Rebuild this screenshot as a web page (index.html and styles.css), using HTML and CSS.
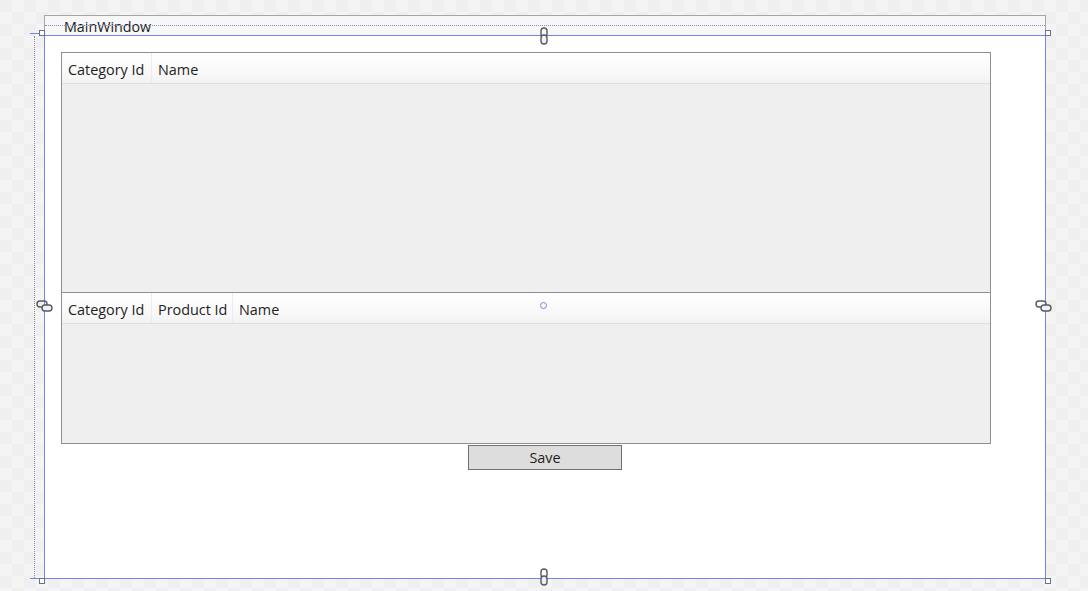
FILE: index.html
```html
<!DOCTYPE html>
<html lang="en">
<head>
  <meta charset="UTF-8">
  <title>MainWindow - Designer</title>
  <link rel="stylesheet" href="styles.css">
</head>
<body>
  <div class="canvas">
    <div class="window">
      <div class="title-bar">MainWindow</div>
      <div class="client">
        <div class="grids">
          <div class="grid grid-top">
            <div class="grid-header">
              <div class="col col-cat">Category Id</div>
              <div class="col col-fill">Name</div>
            </div>
          </div>
          <div class="grid grid-bottom">
            <div class="grid-header">
              <div class="col col-cat">Category Id</div>
              <div class="col col-prod">Product Id</div>
              <div class="col col-fill">Name</div>
            </div>
          </div>
        </div>
        <div class="actions">
          <button class="save-btn">Save</button>
        </div>
      </div>
    </div>

    <!-- designer adorners -->
    <div class="guide guide-v"></div>
    <div class="guide guide-h"></div>
    <div class="tick tick-tl"></div>
    <div class="tick tick-bl"></div>
    <div class="handle handle-tl"></div>
    <div class="handle handle-tr"></div>
    <div class="handle handle-bl"></div>
    <div class="handle handle-br"></div>
    <div class="splitter-dot"></div>

    <svg class="link link-top" width="10" height="18" viewBox="0 0 10 18">
      <rect x="2" y="1" width="6" height="9" rx="3" fill="none" stroke="#5a5a5a" stroke-width="1.4"/>
      <rect x="2" y="8" width="6" height="9" rx="3" fill="#eef0ff" stroke="#5a5a5a" stroke-width="1.4"/>
    </svg>
    <svg class="link link-bottom" width="10" height="18" viewBox="0 0 10 18">
      <rect x="2" y="1" width="6" height="9" rx="3" fill="none" stroke="#5a5a5a" stroke-width="1.4"/>
      <rect x="2" y="8" width="6" height="9" rx="3" fill="#eef0ff" stroke="#5a5a5a" stroke-width="1.4"/>
    </svg>
    <svg class="link link-left" width="18" height="12" viewBox="0 0 18 12">
      <rect x="1" y="1" width="10" height="6" rx="3" fill="none" stroke="#5a5a5a" stroke-width="1.4"/>
      <rect x="6" y="5" width="10" height="6" rx="3" fill="#eef0ff" stroke="#5a5a5a" stroke-width="1.4"/>
    </svg>
    <svg class="link link-right" width="18" height="12" viewBox="0 0 18 12">
      <rect x="1" y="1" width="10" height="6" rx="3" fill="none" stroke="#5a5a5a" stroke-width="1.4"/>
      <rect x="6" y="5" width="10" height="6" rx="3" fill="#eef0ff" stroke="#5a5a5a" stroke-width="1.4"/>
    </svg>
  </div>
</body>
</html>
```

FILE: styles.css
```css
/* Reset */
* {
  margin: 0;
  padding: 0;
  box-sizing: border-box;
}

body {
  background-color: #f2f2f2;
  background-image: repeating-conic-gradient(#f4f4f4 0 25%, #efefef 0 50%);
  background-size: 24px 24px;
  font-family: 'Open Sans', 'Noto Sans', sans-serif;
  font-size: 14px;
  color: #1e1e1e;
}

.canvas {
  position: relative;
  width: 1088px;
  height: 591px;
  overflow: hidden;
  padding-top: 15px;
}

/* The window being designed */
.window {
  margin-left: 44px;
  width: 1002px;
}

.title-bar {
  height: 20px;
  border: 1px solid #a6a6a6;
  border-bottom: none;
  background: #f7f7f7;
  padding-left: 19px;
  padding-top: 1px;
  line-height: 19px;
  font-size: 14.3px;
  color: #222;
}

.client {
  height: 544px;
  border: 1px solid #7385e6;
  background: #fff;
  padding-top: 16px;
}

.grids {
  padding-left: 16px;
}

/* Data grids */
.grid {
  width: 930px;
  border: 1px solid #8c8f96;
  background: #efefef;
}

.grid-top {
  height: 241px;
}

.grid-bottom {
  height: 151px;
  border-top: none;
}

.grid-header {
  display: flex;
  height: 31px;
  background: linear-gradient(#ffffff, #f8f8f8 70%, #f2f2f2);
  border-bottom: 1px solid #dedede;
}

.col {
  padding-left: 6px;
  padding-top: 2px;
  line-height: 29px;
  font-size: 14.4px;
  border-right: 1px solid #ececec;
  white-space: nowrap;
}

.col-cat {
  width: 90px;
}

.col-prod {
  width: 81px;
}

.col-fill {
  flex: 1;
  border-right: none;
}

.actions {
  display: flex;
  justify-content: center;
  padding-top: 1px;
}

.save-btn {
  width: 154px;
  height: 25px;
  background: #dddddd;
  border: 1px solid #707070;
  font-family: 'Open Sans', 'Noto Sans', sans-serif;
  font-size: 14.4px;
  color: #1e1e1e;
}

/* Designer adorners */
.guide {
  position: absolute;
}

.guide-v {
  left: 34px;
  top: 36px;
  height: 542px;
  border-left: 1px dotted #8a8a8a;
}

.guide-h {
  left: 45px;
  top: 25px;
  width: 1000px;
  border-top: 1px dotted #8a8fc0;
}

.tick {
  position: absolute;
  left: 30px;
  width: 10px;
  border-top: 1px solid #7385e6;
}

.tick-tl {
  top: 33px;
}

.tick-bl {
  top: 578px;
}

.handle {
  position: absolute;
  width: 6px;
  height: 6px;
  border: 1px solid #6f6f8a;
  background: #fff;
}

.handle-tl {
  left: 39px;
  top: 30px;
}

.handle-tr {
  left: 1045px;
  top: 30px;
}

.handle-bl {
  left: 39px;
  top: 578px;
}

.handle-br {
  left: 1045px;
  top: 578px;
}

.splitter-dot {
  position: absolute;
  left: 540px;
  top: 302px;
  width: 7px;
  height: 7px;
  border: 1px solid #7b83d6;
  border-radius: 50%;
}

.link {
  position: absolute;
}

.link-top {
  left: 539px;
  top: 27px;
}

.link-bottom {
  left: 539px;
  top: 568px;
}

.link-left {
  left: 36px;
  top: 300px;
}

.link-right {
  left: 1035px;
  top: 300px;
}
```
